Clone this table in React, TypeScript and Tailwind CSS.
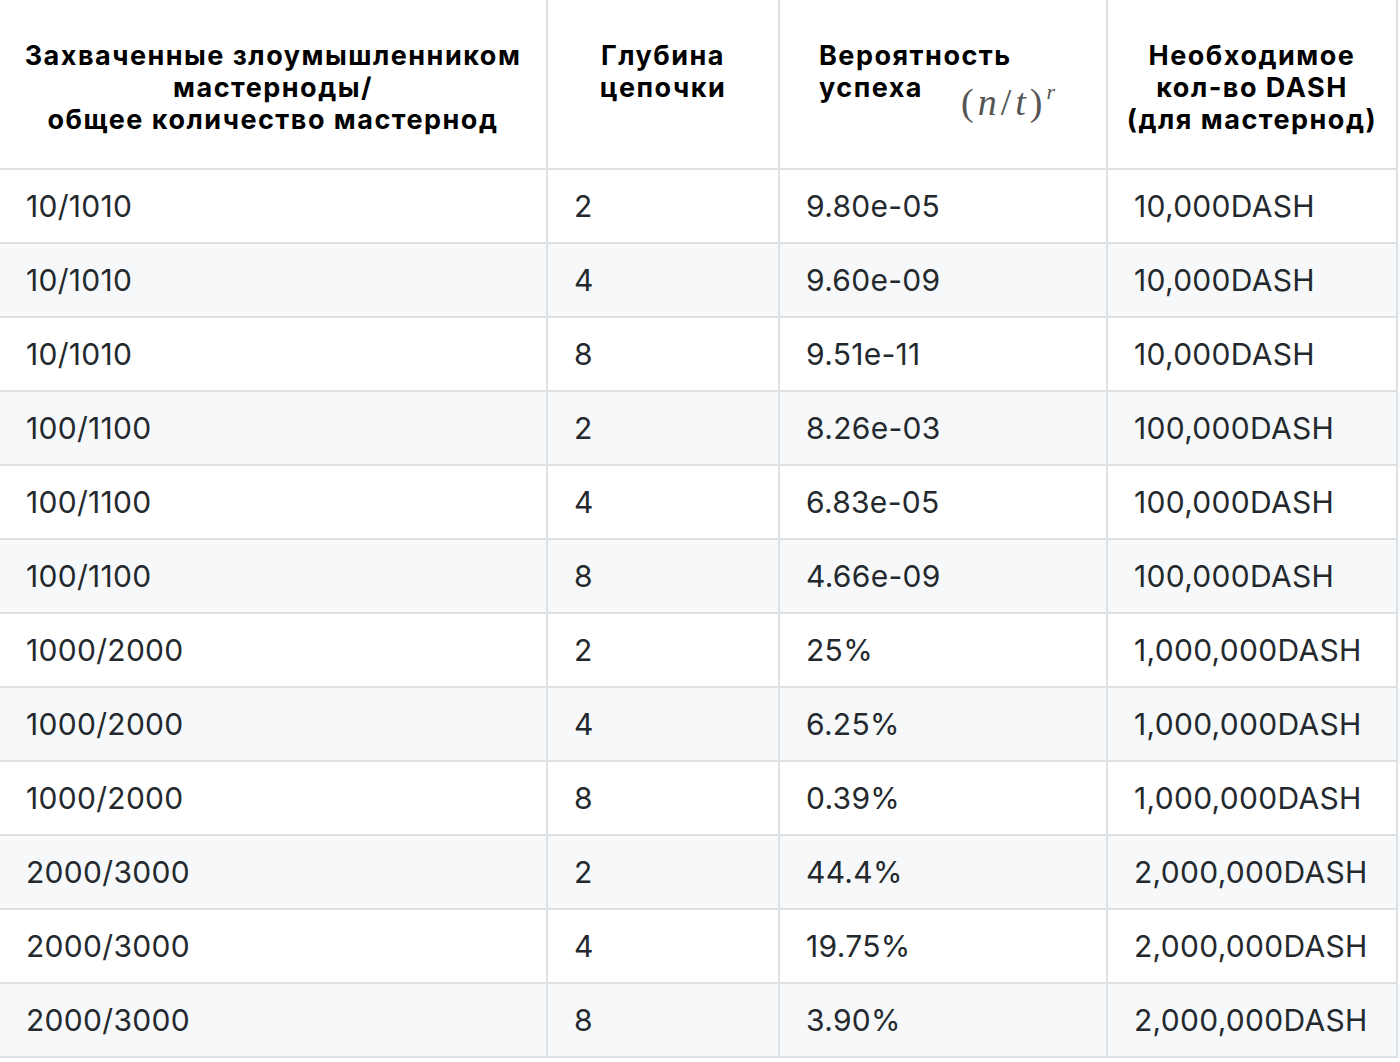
const rows: [string, string, string, string][] = [
  ["10/1010", "2", "9.80e-05", "10,000DASH"],
  ["10/1010", "4", "9.60e-09", "10,000DASH"],
  ["10/1010", "8", "9.51e-11", "10,000DASH"],
  ["100/1100", "2", "8.26e-03", "100,000DASH"],
  ["100/1100", "4", "6.83e-05", "100,000DASH"],
  ["100/1100", "8", "4.66e-09", "100,000DASH"],
  ["1000/2000", "2", "25%", "1,000,000DASH"],
  ["1000/2000", "4", "6.25%", "1,000,000DASH"],
  ["1000/2000", "8", "0.39%", "1,000,000DASH"],
  ["2000/3000", "2", "44.4%", "2,000,000DASH"],
  ["2000/3000", "4", "19.75%", "2,000,000DASH"],
  ["2000/3000", "8", "3.90%", "2,000,000DASH"],
];

const grid = "grid grid-cols-[548px_232px_328px_290px]";
const cell = "border-r-2 border-b-2 border-[#dfe2e5]";

function Formula() {
  return (
    <span className="ml-[38px] inline-block align-[-18px] font-['Liberation_Serif',serif] text-[38px] font-normal leading-none text-[#555] tracking-[4px]">
      (<i>n</i>/<i>t</i>)<sup className="text-[22px] italic -top-[16px]">r</sup>
    </span>
  );
}

export default function App() {
  return (
    <div className="w-[1400px] bg-white font-['Inter',sans-serif] text-[#24292e]">
      <div className={`${grid} text-[27px] font-bold leading-[32px] text-black tracking-[1.5px]`}>
        <div className={`${cell} h-[170px] pt-[40px] text-center`}>
          Захваченные злоумышленником
          <br />
          мастерноды/
          <br />
          общее количество мастернод
        </div>
        <div className={`${cell} h-[170px] pt-[40px] text-center`}>
          Глубина
          <br />
          цепочки
        </div>
        <div className={`${cell} h-[170px] pt-[40px] pl-[39px] text-left`}>
          Вероятность
          <br />
          успеха
          <Formula />
        </div>
        <div className={`${cell} h-[170px] pt-[40px] text-center`}>
          Необходимое
          <br />
          кол-во DASH
          <br />
          (для мастернод)
        </div>
      </div>
      {rows.map((r, i) => (
        <div key={i} className={`${grid} text-[30px] tracking-[0.3px] ${i % 2 === 1 ? "bg-[#f6f8fa]" : "bg-white"}`}>
          {r.map((v, j) => (
            <div key={j} className={`${cell} h-[74px] flex items-center pl-[26px]`}>
              {v}
            </div>
          ))}
        </div>
      ))}
    </div>
  );
}
